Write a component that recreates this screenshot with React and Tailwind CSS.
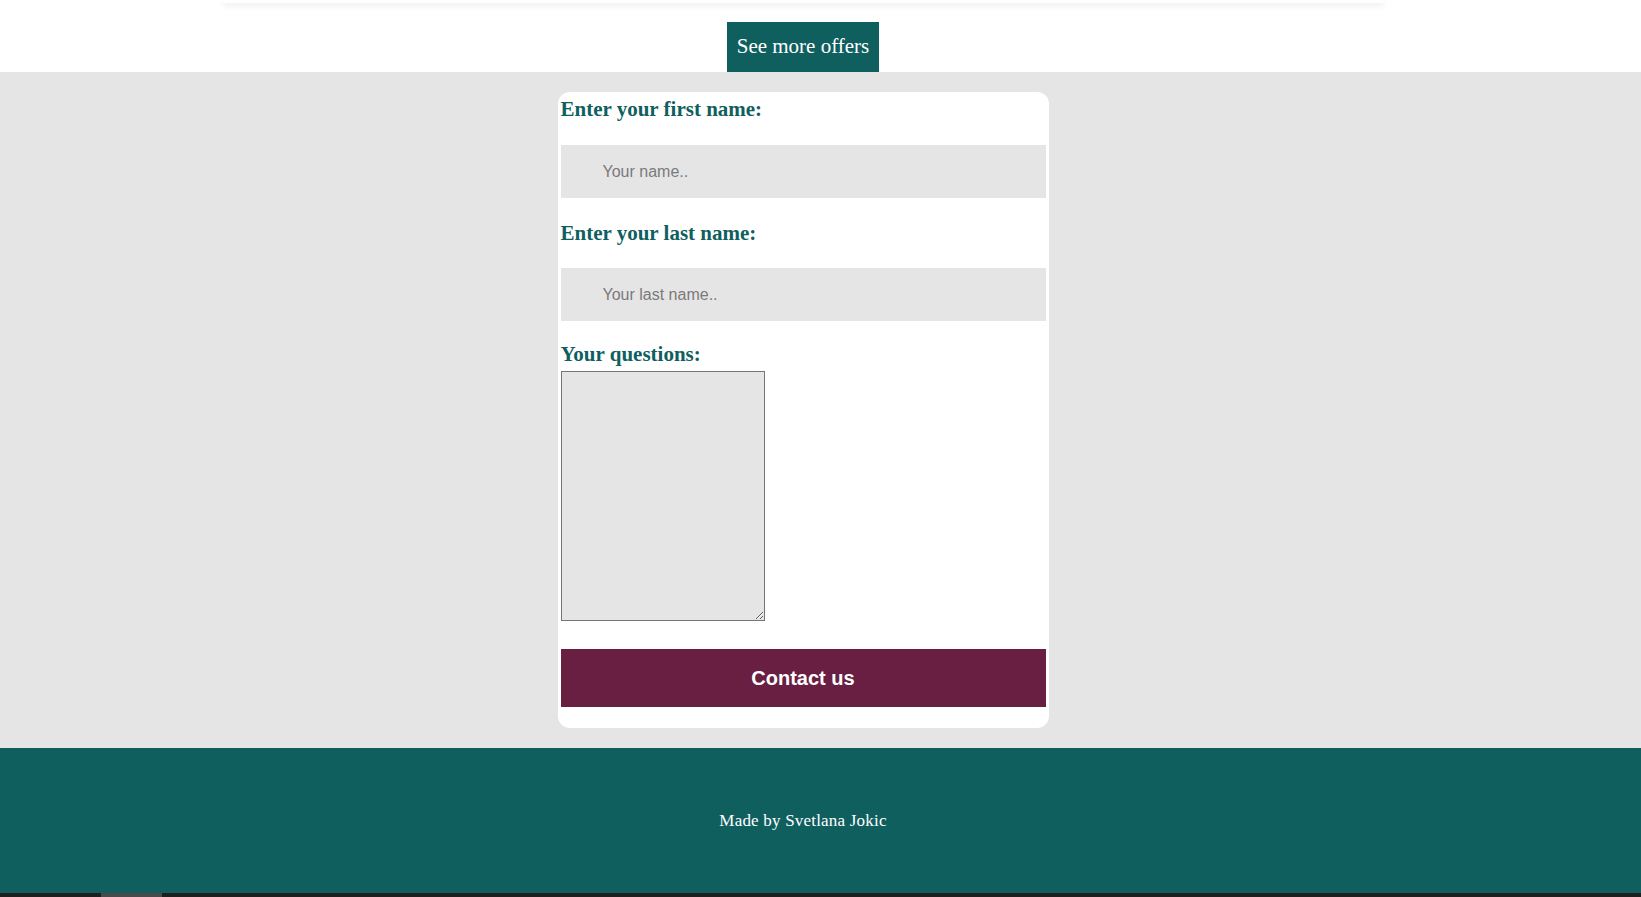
import React from 'react'

const serif = "font-['Liberation_Serif','Times_New_Roman',serif]"
const sans = "font-['Liberation_Sans',Arial,sans-serif]"

function ContactForm() {
  return (
    <form className="w-[491px] mx-auto bg-white rounded-[12px] px-[3px] pt-[5px] pb-[21px]">

      <label className={`${serif} block text-[21px] leading-[24px] font-bold text-[#0f5f5f]`}>
        Enter your first name:
      </label>
      <input
        type="text"
        placeholder="Your name.."
        className={`${sans} block w-full h-[53px] mt-[24px] pl-[42px] bg-[#e5e5e5] text-[16px] placeholder:text-[#7a7a7a] outline-none`}
      />

      <label className={`${serif} block mt-[23px] text-[21px] leading-[24px] font-bold text-[#0f5f5f]`}>
        Enter your last name:
      </label>
      <input
        type="text"
        placeholder="Your last name.."
        className={`${sans} block w-full h-[53px] mt-[23px] pl-[42px] bg-[#e5e5e5] text-[16px] placeholder:text-[#7a7a7a] outline-none`}
      />

      <label className={`${serif} block mt-[21px] text-[21px] leading-[24px] font-bold text-[#0f5f5f]`}>
        Your questions:
      </label>
      <textarea className="block mt-[5px] w-[204px] h-[250px] bg-[#e5e5e5] border border-[#767676] outline-none" />

      <button
        type="button"
        className={`${sans} block w-full h-[58px] mt-[28px] bg-[#691f42] text-white text-[20px] font-bold`}
      >
        Contact us
      </button>

    </form>
  )
}

export default function App() {
  return (
    <div className="bg-white">

      <div className="w-[1606px] h-[72px] flex flex-col">
        <div className="ml-[223px] w-[1160px] h-[3px] bg-white shadow-[0_2px_6px_rgba(0,0,0,0.12)]" />
        <div className="flex justify-center mt-[19px]">
          <button className={`${serif} h-[50px] px-[10px] bg-[#0f5f5f] text-white text-[21px]`}>
            See more offers
          </button>
        </div>
      </div>

      <div className="bg-[#e5e5e5] py-[20px]">
        <div className="w-[1606px]">
          <ContactForm />
        </div>
      </div>

      <footer className="bg-[#0f5f5f] h-[145px]">
        <div className="w-[1606px] h-full flex items-center justify-center">
          <p className={`${serif} text-[17px] tracking-[0.2px] text-white`}>
            Made by Svetlana Jokic
          </p>
        </div>
      </footer>

      <div className="h-[4px] bg-[#1f1f1f] flex">
        <div className="ml-[101px] w-[61px] bg-[#4a4a4d]" />
      </div>

    </div>
  )
}
